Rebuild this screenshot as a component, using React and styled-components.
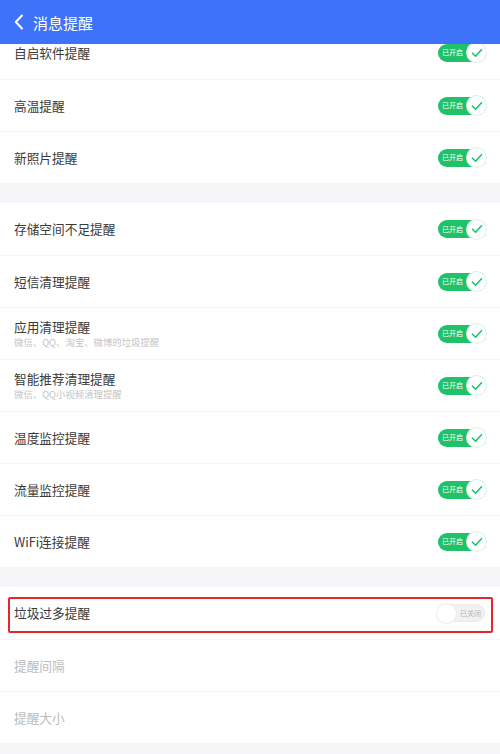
import React from "react";
import styled, { createGlobalStyle } from "styled-components";

const Global = createGlobalStyle`
  html, body { margin: 0; padding: 0; background: #f6f6f8; }
  body { font-family: "Noto Sans CJK SC", "Noto Sans", sans-serif; }
  * { box-sizing: border-box; }
`;

const Page = styled.div`
  width: 500px;
  height: 754px;
  overflow: hidden;
  background: #f6f6f8;
  display: flex;
  flex-direction: column;
`;

const Header = styled.div`
  position: relative;
  z-index: 2;
  height: 44px;
  flex: none;
  background: #3d73f9;
  display: flex;
  align-items: center;
  padding-left: 13px;
  gap: 8px;
  color: #fff;
`;

const Title = styled.div`
  font-size: 15px;
  line-height: 1;
  color: #fff;
`;

const Content = styled.div`
  margin-top: -18px;
  display: flex;
  flex-direction: column;
  gap: 20px;
`;

const Section = styled.div`
  background: #fff;
  display: flex;
  flex-direction: column;
`;

const Row = styled.div`
  height: ${(p) => p.$h || 52}px;
  display: flex;
  align-items: center;
  justify-content: space-between;
  padding: 0 15px 0 14px;
  border-top: ${(p) => (p.$first ? "none" : "1px solid #f5f5f7")};
  position: relative;
`;

const Texts = styled.div`
  display: flex;
  flex-direction: column;
  gap: 3px;
`;

const Label = styled.div`
  font-size: 12.7px;
  line-height: 1.2;
  color: ${(p) => (p.$muted ? "#bdbdbd" : "#3a3a3a")};
`;

const Sub = styled.div`
  font-size: 9.4px;
  line-height: 1.2;
  color: #c4c4c4;
`;

const Toggle = styled.div`
  width: 47px;
  height: 18px;
  border-radius: 9px;
  background: ${(p) => (p.$on ? "#1fc16b" : "#f1f1f1")};
  display: flex;
  align-items: center;
  flex-direction: ${(p) => (p.$on ? "row" : "row-reverse")};
  justify-content: space-between;
  padding: ${(p) => (p.$on ? "0 0 0 4px" : "0 4px 0 0")};
  box-shadow: ${(p) => (p.$on ? "none" : "inset 0 0 0 1px #ececec")};
`;

const ToggleText = styled.span`
  font-size: 7px;
  line-height: 1;
  color: ${(p) => (p.$on ? "#ffffff" : "#b5b5b5")};
  white-space: nowrap;
`;

const Knob = styled.div`
  width: 19px;
  height: 19px;
  flex: none;
  border-radius: 50%;
  background: #fff;
  box-shadow: 0 0 0 1px ${(p) => (p.$on ? "#d9f3e4" : "#ececec")};
  display: flex;
  align-items: center;
  justify-content: center;
  margin: ${(p) => (p.$on ? "0 -1px 0 0" : "0 0 0 -1px")};
`;

const Highlight = styled.div`
  position: absolute;
  left: 8px;
  right: 7px;
  top: 10px;
  bottom: 6px;
  border: 2px solid #e6262a;
  border-radius: 2px;
  pointer-events: none;
`;

function Switch({ on }) {
  return (
    <Toggle $on={on}>
      <ToggleText $on={on}>{on ? "已开启" : "已关闭"}</ToggleText>
      <Knob $on={on}>
        {on && (
          <svg width="12" height="10" viewBox="0 0 12 10">
            <path d="M1.5 5.2 L4.6 8.2 L10.5 1.8" fill="none" stroke="#1fc16b" strokeWidth="1.6" strokeLinecap="round" strokeLinejoin="round" />
          </svg>
        )}
      </Knob>
    </Toggle>
  );
}

const sec1 = ["自启软件提醒", "高温提醒", "新照片提醒"];
const sec2 = [
  { t: "存储空间不足提醒" },
  { t: "短信清理提醒" },
  { t: "应用清理提醒", s: "微信、QQ、淘宝、微博的垃圾提醒" },
  { t: "智能推荐清理提醒", s: "微信、QQ小视频清理提醒" },
  { t: "温度监控提醒" },
  { t: "流量监控提醒" },
  { t: "WiFi连接提醒" },
];

export default function App() {
  return (
    <>
      <Global />
      <Page>
        <Header>
          <svg width="12" height="16" viewBox="0 0 12 16">
            <path d="M9 1.5 L2.8 8 L9 14.5" fill="none" stroke="#fff" strokeWidth="2" strokeLinecap="round" strokeLinejoin="round" />
          </svg>
          <Title>消息提醒</Title>
        </Header>
        <Content>
          <Section>
            {sec1.map((t, i) => (
              <Row key={t} $first={i === 0} $h={i === 0 ? 53 : 52}>
                <Label>{t}</Label>
                <Switch on />
              </Row>
            ))}
          </Section>
          <Section>
            {sec2.map((r, i) => (
              <Row key={r.t} $first={i === 0} $h={52}>
                <Texts>
                  <Label>{r.t}</Label>
                  {r.s && <Sub>{r.s}</Sub>}
                </Texts>
                <Switch on />
              </Row>
            ))}
          </Section>
          <Section>
            <Row $first $h={52}>
              <Label>垃圾过多提醒</Label>
              <Switch on={false} />
              <Highlight />
            </Row>
            <Row $h={52}>
              <Label $muted>提醒间隔</Label>
            </Row>
            <Row $h={52}>
              <Label $muted>提醒大小</Label>
            </Row>
          </Section>
        </Content>
      </Page>
    </>
  );
}
